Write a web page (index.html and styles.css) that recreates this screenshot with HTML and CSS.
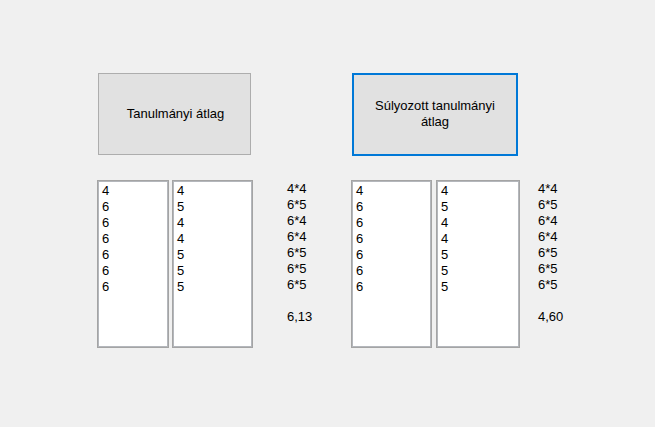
FILE: index.html
```html
<!DOCTYPE html>
<html>
<head>
<meta charset="utf-8">
<link rel="stylesheet" href="styles.css">
</head>
<body>
<div class="form">
  <div class="group g1">
    <button class="btn b1">Tanulmányi átlag</button>
    <div class="row">
      <div class="list l1"><div>4</div><div>6</div><div>6</div><div>6</div><div>6</div><div>6</div><div>6</div></div>
      <div class="list l2"><div>4</div><div>5</div><div>4</div><div>4</div><div>5</div><div>5</div><div>5</div></div>
      <div class="label lab1"><div>4*4</div><div>6*5</div><div>6*4</div><div>6*4</div><div>6*5</div><div>6*5</div><div>6*5</div><div>&nbsp;</div><div>6,13</div></div>
    </div>
  </div>
  <div class="group g2">
    <button class="btn b2">Súlyozott tanulmányi<br>átlag</button>
    <div class="row">
      <div class="list l3"><div>4</div><div>6</div><div>6</div><div>6</div><div>6</div><div>6</div><div>6</div></div>
      <div class="list l4"><div>4</div><div>5</div><div>4</div><div>4</div><div>5</div><div>5</div><div>5</div></div>
      <div class="label lab2"><div>4*4</div><div>6*5</div><div>6*4</div><div>6*4</div><div>6*5</div><div>6*5</div><div>6*5</div><div>&nbsp;</div><div>4,60</div></div>
    </div>
  </div>
</div>
</body>
</html>
```
FILE: styles.css
```css
html, body {
  margin: 0;
  padding: 0;
  background: #f0f0f0;
  width: 655px;
  height: 427px;
  overflow: hidden;
}
body {
  font-family: "Liberation Sans", Arial, sans-serif;
  font-size: 13px;
  color: #000;
}
.form {
  display: flex;
  padding: 73px 0 0 97px;
}
.group {
  display: flex;
  flex-direction: column;
  align-items: flex-start;
}
.g1 { width: 254px; }
.btn {
  font-family: "Liberation Sans", Arial, sans-serif;
  font-size: 13px;
  line-height: 16px;
  color: #000;
  background: #e1e1e1;
  margin: 0 0 0 1px;
  padding: 0;
  box-sizing: border-box;
}
.b1 {
  width: 153px;
  height: 82px;
  border: 1px solid #adadad;
  padding-left: 2px;
}
.b2 {
  width: 166px;
  height: 83px;
  border: 2px solid #0078d7;
  padding-bottom: 2px;
}
.row {
  display: flex;
  align-items: flex-start;
  margin-top: 25px;
}
.g2 .row { margin-top: 24px; }
.list {
  box-sizing: border-box;
  height: 168px;
  background: #fff;
  border: 1px solid #a4a4a4;
  box-shadow: inset 0 0 0 1px #b4b7bc;
  padding: 2px 4px;
  line-height: 16px;
}
.l1 { width: 72px; }
.l2 { width: 81px; margin-left: 3px; }
.l3 { width: 81px; }
.l4 { width: 84px; margin-left: 4px; }
.label {
  line-height: 16px;
  margin-top: 1px;
}
.lab1 { margin-left: 34px; }
.lab2 { margin-left: 18px; }
```
